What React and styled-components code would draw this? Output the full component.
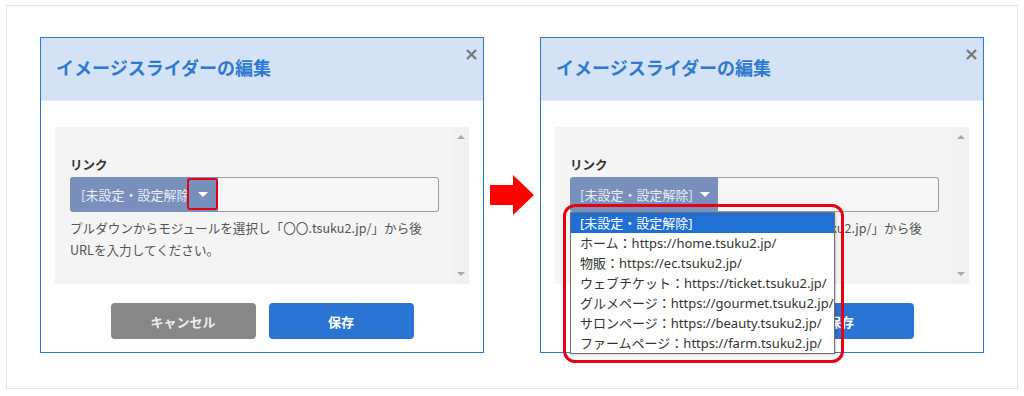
import React from "react";
import styled, { createGlobalStyle } from "styled-components";

const GlobalStyle = createGlobalStyle`
  html, body { margin: 0; padding: 0; background: #ffffff; }
  body {
    font-family: "Noto Sans", "Noto Sans CJK JP", sans-serif;
    color: #333;
  }
  * { box-sizing: border-box; }
`;

const Page = styled.div`
  width: 1024px;
  height: 396px;
  padding: 5px 6px 7px;
`;

const Frame = styled.div`
  height: 384px;
  border: 1px solid #e2e2e2;
  display: flex;
  align-items: flex-start;
  padding: 31px 33px 0;
`;

const ArrowArea = styled.div`
  width: 56px;
  display: flex;
  justify-content: center;
  margin-top: 138px;
`;

const Dialog = styled.div`
  position: relative;
  width: 444px;
  height: 316px;
  border: 1px solid #2b7bd0;
  background: #fff;
  display: flex;
  flex-direction: column;
`;

const Header = styled.div`
  position: relative;
  height: 63px;
  background: #d3e2f5;
  border-bottom: 1px solid #e4e9f0;
  display: flex;
  align-items: center;
  padding-left: 15px;
`;

const Title = styled.h2`
  margin: 0 0 4px;
  font-family: "Noto Sans CJK JP", sans-serif;
  font-size: 18px;
  font-weight: 700;
  color: #2f7ad1;
  letter-spacing: 0;
`;

const Close = styled.div`
  position: absolute;
  top: 11px;
  right: 6px;
  width: 11px;
  height: 11px;
  display: flex;
`;

const Body = styled.div`
  padding: 26px 14px 0;
`;

const Panel = styled.div`
  height: 157px;
  background: #f4f4f4;
  display: flex;
`;

const PanelContent = styled.div`
  flex: 1;
  padding: 29px 13px 0 15px;
`;

const Scrollbar = styled.div`
  width: 17px;
  background: #f1f1f1;
  display: flex;
  flex-direction: column;
  justify-content: space-between;
  align-items: center;
  padding: 8px 0 8px;
`;

const ScrollArrow = styled.div`
  width: 0;
  height: 0;
  border-left: 4px solid transparent;
  border-right: 4px solid transparent;
  ${(p) =>
    p.$up
      ? "border-bottom: 4px solid #a9a9a9;"
      : "border-top: 4px solid #a9a9a9;"}
`;

const Label = styled.div`
  font-family: "Noto Sans CJK JP", sans-serif;
  font-size: 12.5px;
  font-weight: 700;
  line-height: 18px;
  color: #333;
  margin-bottom: 3px;
`;

const SelectWrap = styled.div`
  position: relative;
  display: flex;
  height: 35px;
`;

const SelectButton = styled.div`
  width: 148px;
  background: #7890bb;
  border-radius: 3px 0 0 3px;
  display: flex;
  align-items: center;
  padding-left: ${(p) => (p.$open ? 10 : 11)}px;
  color: #e9edf5;
  font-family: "Noto Sans CJK JP", sans-serif;
  font-size: 13px;
`;

const SelectText = styled.span`
  flex: ${(p) => (p.$open ? "none" : "1")};
  overflow: hidden;
  white-space: nowrap;
`;

const ArrowCell = styled.div`
  position: relative;
  ${(p) => (p.$open ? "flex: 1;" : "width: 31px;")}
  height: 100%;
  display: flex;
  align-items: center;
  justify-content: center;
`;

const Caret = styled.div`
  width: 0;
  height: 0;
  border-left: 5px solid transparent;
  border-right: 5px solid transparent;
  border-top: 5px solid #ffffff;
`;

const Input = styled.div`
  flex: 1;
  background: #f6f6f6;
  border: 1px solid #9d9d9d;
  border-left: none;
  border-radius: 0 3px 3px 0;
`;

const Help = styled.p`
  margin: 5px 0 0;
  font-family: "Noto Sans CJK JP", sans-serif;
  font-size: 12.6px;
  line-height: 22px;
  color: #555;
`;

const Buttons = styled.div`
  display: flex;
  justify-content: center;
  gap: 13px;
  margin-top: 19px;
`;

const Button = styled.button`
  width: 145px;
  height: 36px;
  border: none;
  border-radius: 4px;
  background: ${(p) => (p.$primary ? "#2a75d3" : "#878787")};
  color: ${(p) => (p.$primary ? "#ffffff" : "#eeeeee")};
  font-family: "Noto Sans CJK JP", sans-serif;
  font-size: 13px;
  font-weight: 700;
  padding: 0;
`;

const Mark = styled.div`
  position: absolute;
  border: ${(p) => p.$bw}px solid #e60012;
  border-radius: ${(p) => p.$r}px;
  pointer-events: none;
  top: ${(p) => p.$t}px;
  left: ${(p) => p.$l}px;
  right: ${(p) => p.$rt}px;
  bottom: ${(p) => p.$b}px;
`;

const Dropdown = styled.div`
  position: absolute;
  top: 35px;
  left: 0;
  width: 265px;
  background: #fff;
  border: 1px solid #6f6f6f;
  box-shadow: 1px 1px 2px rgba(0, 0, 0, 0.2);
  z-index: 5;
`;

const Option = styled.div`
  height: 20px;
  line-height: 20px;
  padding-left: 9px;
  font-family: "Noto Sans", "Noto Sans CJK JP", sans-serif;
  font-size: 13px;
  white-space: nowrap;
  color: ${(p) => (p.$active ? "#ffffff" : "#333333")};
  background: ${(p) => (p.$active ? "#1f6fd5" : "transparent")};
`;

const options = [
  "[未設定・設定解除]",
  "ホーム：https://home.tsuku2.jp/",
  "物販：https://ec.tsuku2.jp/",
  "ウェブチケット：https://ticket.tsuku2.jp/",
  "グルメページ：https://gourmet.tsuku2.jp/",
  "サロンページ：https://beauty.tsuku2.jp/",
  "ファームページ：https://farm.tsuku2.jp/",
];

function CloseIcon() {
  return (
    <svg width="11" height="11" viewBox="0 0 11 11">
      <path d="M1 1 L10 10 M10 1 L1 10" stroke="#7a7a7a" strokeWidth="2.4" strokeLinecap="butt" />
    </svg>
  );
}

function EditDialog({ open }) {
  return (
    <Dialog>
      <Header>
        <Title>イメージスライダーの編集</Title>
        <Close>
          <CloseIcon />
        </Close>
      </Header>
      <Body>
        <Panel>
          <PanelContent>
            <Label>リンク</Label>
            <SelectWrap>
              <SelectButton $open={open}>
                <SelectText $open={open}>[未設定・設定解除]</SelectText>
                <ArrowCell $open={open}>
                  <Caret />
                  {!open && <Mark $bw={2} $r={3} $t={1} $l={0} $rt={0} $b={2} />}
                </ArrowCell>
              </SelectButton>
              <Input />
              {open && (
                <Dropdown>
                  {options.map((o, i) => (
                    <Option key={o} $active={i === 0}>
                      {o}
                    </Option>
                  ))}
                  <Mark $bw={3} $r={12} $t={-9} $l={-8} $rt={-10} $b={-10} />
                </Dropdown>
              )}
            </SelectWrap>
            <Help>
              プルダウンからモジュールを選択し「〇〇.tsuku2.jp/」から後
              <br />
              URLを入力してください。
            </Help>
          </PanelContent>
          <Scrollbar>
            <ScrollArrow $up />
            <ScrollArrow />
          </Scrollbar>
        </Panel>
        <Buttons>
          <Button>キャンセル</Button>
          <Button $primary>保存</Button>
        </Buttons>
      </Body>
    </Dialog>
  );
}

function RightArrow() {
  return (
    <svg width="44" height="40" viewBox="0 0 44 40">
      <polygon points="0,10 23,10 23,0 44,20 23,40 23,30 0,30" fill="#ff0000" />
    </svg>
  );
}

export default function App() {
  return (
    <>
      <GlobalStyle />
      <Page>
        <Frame>
          <EditDialog />
          <ArrowArea>
            <RightArrow />
          </ArrowArea>
          <EditDialog open />
        </Frame>
      </Page>
    </>
  );
}
